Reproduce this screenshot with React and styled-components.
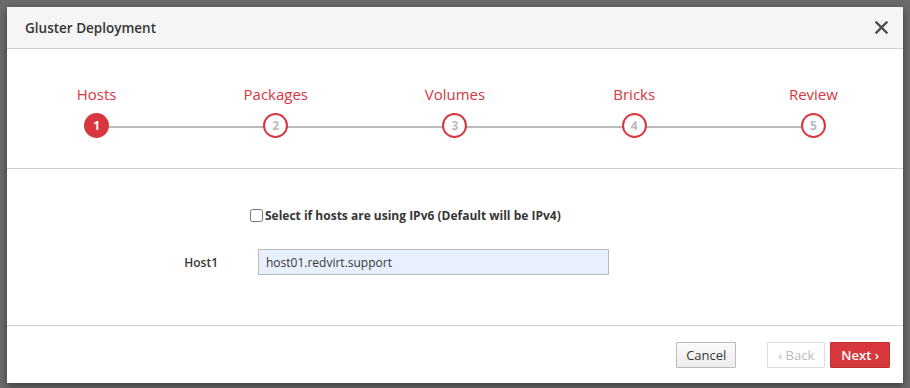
import React from "react";
import styled, { createGlobalStyle } from "styled-components";

const GlobalStyle = createGlobalStyle`
  html, body {
    margin: 0;
    padding: 0;
    background: #6b6b6b;
    font-family: "Open Sans", "Liberation Sans", sans-serif;
  }
`;

const Backdrop = styled.div`
  width: 910px;
  height: 388px;
  padding: 7px;
  box-sizing: border-box;
  background: #6b6b6b;
`;

const Modal = styled.div`
  width: 896px;
  height: 376px;
  background: #fff;
  box-shadow: 0 3px 8px rgba(0, 0, 0, 0.45);
  display: flex;
  flex-direction: column;
`;

const Header = styled.div`
  height: 41px;
  background: #f5f5f5;
  border-bottom: 1px solid #d1d1d1;
  display: flex;
  align-items: center;
  justify-content: space-between;
  padding: 0 14px 0 18px;
`;

const Title = styled.h4`
  margin: 0;
  font-size: 13.5px;
  font-weight: 600;
  color: #363636;
`;

const Close = styled.button`
  border: 0;
  background: none;
  padding: 0;
  width: 16px;
  height: 16px;
  display: flex;
  align-items: center;
  justify-content: center;
`;

const Steps = styled.div`
  position: relative;
  height: 120px;
  border-bottom: 1px solid #d1d1d1;
  display: grid;
  grid-template-columns: repeat(5, 1fr);
  align-content: start;
  padding-top: 35px;
  box-sizing: border-box;
`;

const Track = styled.div`
  position: absolute;
  top: 77px;
  left: 10%;
  right: 10%;
  height: 2px;
  background: #bbbbbb;
`;

const Step = styled.div`
  position: relative;
  display: flex;
  flex-direction: column;
  align-items: center;
  gap: 9px;
`;

const StepLabel = styled.span`
  font-size: 15px;
  line-height: 20px;
  color: #d9363e;
`;

const Circle = styled.span`
  width: 21px;
  height: 21px;
  border-radius: 50%;
  border: 2px solid #d9363e;
  background: ${p => (p.$active ? "#d9363e" : "#fff")};
  color: ${p => (p.$active ? "#fff" : "#bbb")};
  font-size: 12px;
  font-weight: 700;
  display: flex;
  align-items: center;
  justify-content: center;
`;

const Body = styled.div`
  flex: 1;
  border-bottom: 1px solid #d1d1d1;
  display: flex;
  flex-direction: column;
  padding-top: 38px;
  box-sizing: border-box;
`;

const CheckRow = styled.label`
  display: flex;
  align-items: center;
  padding-left: 243px;
  font-size: 12px;
  font-weight: 700;
  color: #363636;
`;

const Check = styled.input`
  margin: 0 2px 0 0;
  width: 13px;
  height: 13px;
`;

const FieldRow = styled.div`
  display: flex;
  align-items: center;
  margin-top: 25px;
`;

const FieldLabel = styled.label`
  width: 211px;
  text-align: right;
  font-size: 12px;
  font-weight: 600;
  color: #363636;
`;

const TextInput = styled.input`
  margin-left: 40px;
  width: 351px;
  height: 26px;
  box-sizing: border-box;
  border: 1px solid #bbb;
  background: #e8f0fe;
  padding: 0 7px;
  font-family: inherit;
  font-size: 12px;
  color: #363636;
`;

const Footer = styled.div`
  height: 57px;
  display: flex;
  align-items: center;
  justify-content: flex-end;
  padding-right: 13px;
  box-sizing: border-box;
`;

const Button = styled.button`
  height: 26px;
  padding: 0 ${p => p.$px || 9}px;
  margin-left: ${p => p.$gap || 0}px;
  font-family: inherit;
  font-size: 13px;
  font-weight: ${p => p.$weight || 400};
  border-radius: 1px;
  border: 1px solid ${p => p.$border};
  background: ${p => p.$bg};
  color: ${p => p.$color};
  display: flex;
  align-items: center;
  gap: 5px;
`;

const steps = ["Hosts", "Packages", "Volumes", "Bricks", "Review"];

export default function App() {
  return (
    <>
      <GlobalStyle />
      <Backdrop>
        <Modal>
          <Header>
            <Title>Gluster Deployment</Title>
            <Close aria-label="Close">
              <svg width="13" height="13" viewBox="0 0 13 13">
                <path d="M1.5 1.5 L11.5 11.5 M11.5 1.5 L1.5 11.5" stroke="#4d4d4d" strokeWidth="2.4" strokeLinecap="square" />
              </svg>
            </Close>
          </Header>
          <Steps>
            <Track />
            {steps.map((s, i) => (
              <Step key={s}>
                <StepLabel>{s}</StepLabel>
                <Circle $active={i === 0}>{i + 1}</Circle>
              </Step>
            ))}
          </Steps>
          <Body>
            <CheckRow>
              <Check type="checkbox" />
              Select if hosts are using IPv6 (Default will be IPv4)
            </CheckRow>
            <FieldRow>
              <FieldLabel>Host1</FieldLabel>
              <TextInput defaultValue="host01.redvirt.support" />
            </FieldRow>
          </Body>
          <Footer>
            <Button
              $bg="linear-gradient(#fafafa, #ededed)"
              $border="#bbb"
              $color="#363636"
              $px={9}
            >
              Cancel
            </Button>
            <Button $bg="#fff" $border="#ddd" $color="#bbb" $gap={31} $px={10}>
              ‹ Back
            </Button>
            <Button
              $bg="linear-gradient(#d9363e, #d43b3b)"
              $border="#c52e2e"
              $color="#fff"
              $gap={5}
              $px={10}
              $weight={600}
            >
              Next ›
            </Button>
          </Footer>
        </Modal>
      </Backdrop>
    </>
  );
}
